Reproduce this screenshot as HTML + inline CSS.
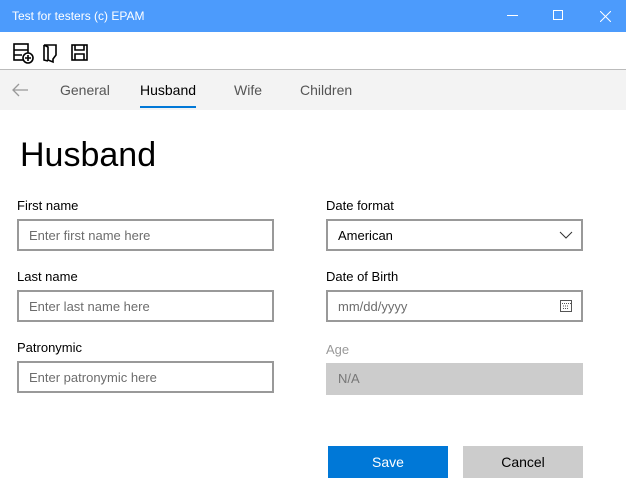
<!DOCTYPE html><html><head><style>
*{margin:0;padding:0;box-sizing:border-box}
body{width:626px;height:502px;background:#fff;font-family:"Liberation Sans",sans-serif;position:relative;overflow:hidden;color:#000}
.a{position:absolute}
.title{left:0;top:0;width:626px;height:32px;background:#4c9bfc;color:#fff;font-size:12px}
.tab{font-size:14px;color:#555;top:82px}
.lbl{font-size:13px;color:#000}
.in{border:2px solid #999;height:32px;width:257px;font-size:13px;color:#6d6d6d;padding:7px 10px}
</style></head><body>
<div class="a title"><span class="a" style="left:12px;top:9px">Test for testers (c) EPAM</span>
<span class="a" style="left:507px;top:15px;width:11px;height:1px;background:#fff"></span>
<span class="a" style="left:553px;top:10px;width:10px;height:10px;border:1px solid #fff"></span>
<svg class="a" style="left:600px;top:11px" width="11" height="11" stroke="#fff" stroke-width="1"><path d="M0 0L11 11M11 0L0 11"/></svg></div>
<svg class="a" style="left:12px;top:42px" width="82" height="22" fill="none" stroke="#000" stroke-width="1.6">
<rect x="2" y="2" width="14" height="16"/><path d="M2 8h14M2 13h8"/><circle cx="16" cy="16" r="5" fill="#fff"/><path d="M16 13v6M13 16h6"/>
<path d="M32 3h12v10l-3 4v3l-5-2V5z M32 3v15l4 1"/>
<rect x="60" y="3" width="15" height="15"/><path d="M63 3v5h9V3M63 18v-6h9v6"/></svg>
<div class="a" style="left:0;top:69px;width:626px;height:1px;background:#bbb"></div>
<div class="a" style="left:0;top:70px;width:626px;height:40px;background:#f3f3f3"></div>
<svg class="a" style="left:11px;top:82px" width="18" height="16" stroke="#999" stroke-width="1.3" fill="none"><path d="M17 8H2M8 2L2 8l6 6"/></svg>
<div class="a tab" style="left:60px">General</div>
<div class="a tab" style="left:140px;color:#000">Husband</div>
<div class="a" style="left:140px;top:106px;width:56px;height:2px;background:#0078d7"></div>
<div class="a tab" style="left:234px">Wife</div>
<div class="a tab" style="left:300px">Children</div>
<div class="a" style="left:20px;top:136px;font-size:34px">Husband</div>
<div class="a lbl" style="left:17px;top:198px">First name</div>
<div class="a in" style="left:17px;top:219px">Enter first name here</div>
<div class="a lbl" style="left:17px;top:269px">Last name</div>
<div class="a in" style="left:17px;top:290px">Enter last name here</div>
<div class="a lbl" style="left:17px;top:340px">Patronymic</div>
<div class="a in" style="left:17px;top:361px">Enter patronymic here</div>
<div class="a lbl" style="left:326px;top:198px">Date format</div>
<div class="a in" style="left:326px;top:219px;color:#000">American
<svg class="a" style="right:8px;top:10px" width="14" height="9" fill="none" stroke="#333" stroke-width="1"><path d="M1 1l6 6 6-6"/></svg></div>
<div class="a lbl" style="left:326px;top:269px">Date of Birth</div>
<div class="a in" style="left:326px;top:290px">mm/dd/yyyy
<svg class="a" style="right:9px;top:8px" width="12" height="12" fill="none" stroke="#555" stroke-width="1"><rect x="0.5" y="0.5" width="11" height="11"/><path d="M0 3.5h12M3 6h6M3 8.5h6" stroke-dasharray="1 1"/></svg></div>
<div class="a lbl" style="left:326px;top:342px;color:#999">Age</div>
<div class="a" style="left:326px;top:363px;width:257px;height:32px;background:#ccc;font-size:13px;color:#777;padding:8px 12px">N/A</div>
<div class="a" style="left:328px;top:446px;width:120px;height:32px;background:#0078d7;color:#fff;font-size:14px;text-align:center;line-height:32px">Save</div>
<div class="a" style="left:463px;top:446px;width:120px;height:32px;background:#ccc;color:#000;font-size:14px;text-align:center;line-height:32px">Cancel</div>
</body></html>
